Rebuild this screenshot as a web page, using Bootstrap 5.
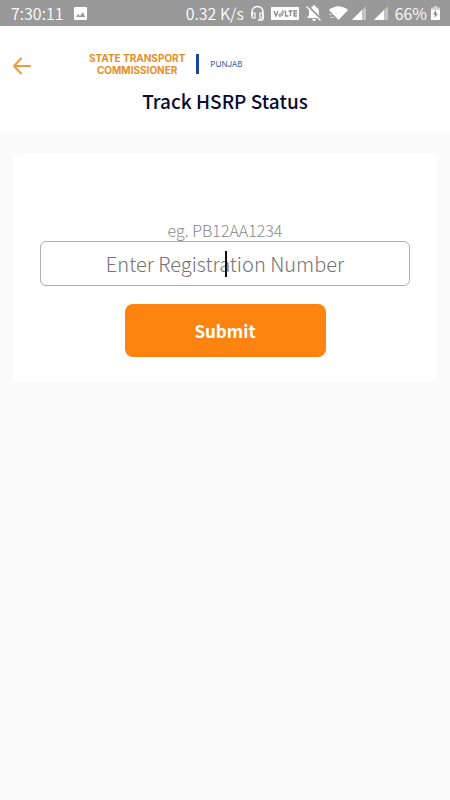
<!DOCTYPE html>
<html lang="en">
<head>
<meta charset="utf-8">
<meta name="viewport" content="width=device-width, initial-scale=1">
<title>Track HSRP Status</title>
<link rel="stylesheet" href="https://cdn.jsdelivr.net/npm/bootstrap@5.3.0/dist/css/bootstrap.min.css">
<style>
body { background: #fafafa; font-family: "Noto Sans CJK SC", "Noto Sans", sans-serif; color: #0a0a32; }
svg { display: block; flex: none; }
.statusbar { background: #999; color: #fff; height: 26px; padding: 0 10px 0 11px; font-size: 16px; font-weight: 350; line-height: 26px; white-space: nowrap; }
.status-left { gap: 10px; }
.status-icons { gap: 7px; }
.app-header { padding: 26px 12px 19px; }
.back-link { width: 20px; padding-top: 4px; }
.brand { gap: 11px; margin-left: 57px; }
.brand-name { color: #e88d26; font: 700 10px/12px Inter, sans-serif; text-align: center; }
.brand-rule { width: 3px; height: 20px; background: #15479a; }
.brand-state { color: #33609f; font: 400 8px/12px Inter, sans-serif; }
.page-title { font-size: 19px; line-height: 24px; font-weight: 500; margin-top: 13px; }
.track-card { margin: 21px 13px; padding: 66px 27px 25px; border-radius: 6px; }
.hint { font-size: 16px; line-height: 22px; font-weight: 300; color: #888; }
.reg-input { height: 45px; border: 1px solid #b0b0b0; border-radius: 6px; font-size: 20px; font-weight: 300; padding: 0 12px; }
.reg-input::placeholder { color: #727272; }
.text-caret { position: absolute; left: 50%; top: 10px; width: 2px; height: 26px; background: #111; }
.submit-btn { width: 201px; height: 53px; margin-top: 18px; border-radius: 8px; background: #fd8411; color: #fff; font-size: 17px; font-weight: 700; }
.submit-btn:hover { background: #e9760a; color: #fff; }
</style>
</head>
<body>
<div class="statusbar d-flex align-items-center justify-content-between">
  <div class="status-left d-flex align-items-center">
    <span>7:30:11</span>
    <svg width="13" height="13" viewBox="0 0 13 13"><rect width="13" height="13" rx="1" fill="#fff"/><path d="M2 10l2-3 2 2 3-4 2 5z" fill="#999"/></svg>
  </div>
  <div class="status-icons d-flex align-items-center">
    <span>0.32 K/s</span>
    <svg width="13" height="16" viewBox="0 0 13 16" fill="none" stroke="#fff"><path d="M1 11V7a5.500 5.500 0 0 1 11 0v7q0 1-1 1H7" stroke-width="1.400"/><path d="M1 8h3v5H2q-1 0-1-1zM12 8H9v5h3z" stroke-width="1.200"/></svg>
    <svg width="28" height="13" viewBox="0 0 28 13"><rect width="28" height="13" fill="#fff"/><g fill="none" stroke="#888" stroke-width="1.300"><path d="M3 4l2 5 2-5M14.500 3.500v5.500h3M17.500 4h4M19.500 4v5M26 4h-3v5h3M23 6.500h3"/><path d="M8 9q-1-2 1-2t1 2q-1 1-2 0M10 7l2-4M11 9l2-5" stroke-width="1"/></g></svg>
    <svg width="16" height="16" viewBox="0 0 16 16"><path d="M8 0q1.300 0 1.300 1.700Q13 2.800 13 7v3l2 3H1l2-3V7q0-4.200 3.700-5.300Q6.700 0 8 0M6 14h4q-.5 2-2 2t-2-2" fill="#fff"/><path d="M1.500.5l14 14" stroke="#999" stroke-width="2"/><path d="M.5 1.500l14 14" stroke="#fff" stroke-width="1.300"/></svg>
    <div class="d-flex gap-1">
      <svg width="19" height="14" viewBox="0 0 19 14" fill="#fff"><path d="M0 4Q9.500-3.500 19 4l-9.500 10z"/><path d="M0 8h3v1H0zM1 11h4v1H1z" opacity=".6"/></svg>
      <svg width="14" height="14" viewBox="0 0 14 14"><path d="M0 14L14 0v14z" fill="#fff" opacity=".4"/><path d="M0 14L10 4v10z" fill="#fff"/></svg>
      <svg class="ms-1" width="14" height="14" viewBox="0 0 14 14"><path d="M0 14L14 0v14z" fill="#fff" opacity=".4"/><path d="M0 14L10 4v10z" fill="#fff"/></svg>
    </div>
    <div class="d-flex align-items-center gap-1">
      <span>66%</span>
      <svg width="9" height="14" viewBox="0 0 9 14"><path d="M3 0h3v1.500h3V14H0V1.500h3z" fill="#fff" opacity=".6"/><path d="M0 4h9v10H0z" fill="#fff"/><path d="M5 4L2 8.500h2L3.500 12 7 7.500H5z" fill="#888"/></svg>
    </div>
  </div>
</div>
<header class="app-header bg-white">
  <div class="d-flex align-items-center">
    <a href="#" class="back-link" aria-label="Back"><svg width="20" height="20" viewBox="0 0 20 20" fill="none" stroke="#eb9b42" stroke-width="2" stroke-linecap="round" stroke-linejoin="round"><path d="M18 10H2M9 2.500L2 10l7 7.500"/></svg></a>
    <div class="brand d-flex align-items-center">
      <div class="brand-name">STATE TRANSPORT<br>COMMISSIONER</div>
      <div class="brand-rule"></div>
      <div class="brand-state">PUNJAB</div>
    </div>
  </div>
  <h1 class="page-title text-center mb-0">Track HSRP Status</h1>
</header>
<main>
  <form class="track-card bg-white d-flex flex-column align-items-center">
    <label class="hint" for="reg">eg. PB12AA1234</label>
    <div class="position-relative w-100">
      <input id="reg" class="reg-input form-control text-center" type="text" placeholder="Enter Registration Number">
      <span class="text-caret"></span>
    </div>
    <button type="submit" class="btn submit-btn">Submit</button>
  </form>
</main>
<script src="https://cdn.jsdelivr.net/npm/bootstrap@5.3.0/dist/js/bootstrap.bundle.min.js"></script>
</body>
</html>
